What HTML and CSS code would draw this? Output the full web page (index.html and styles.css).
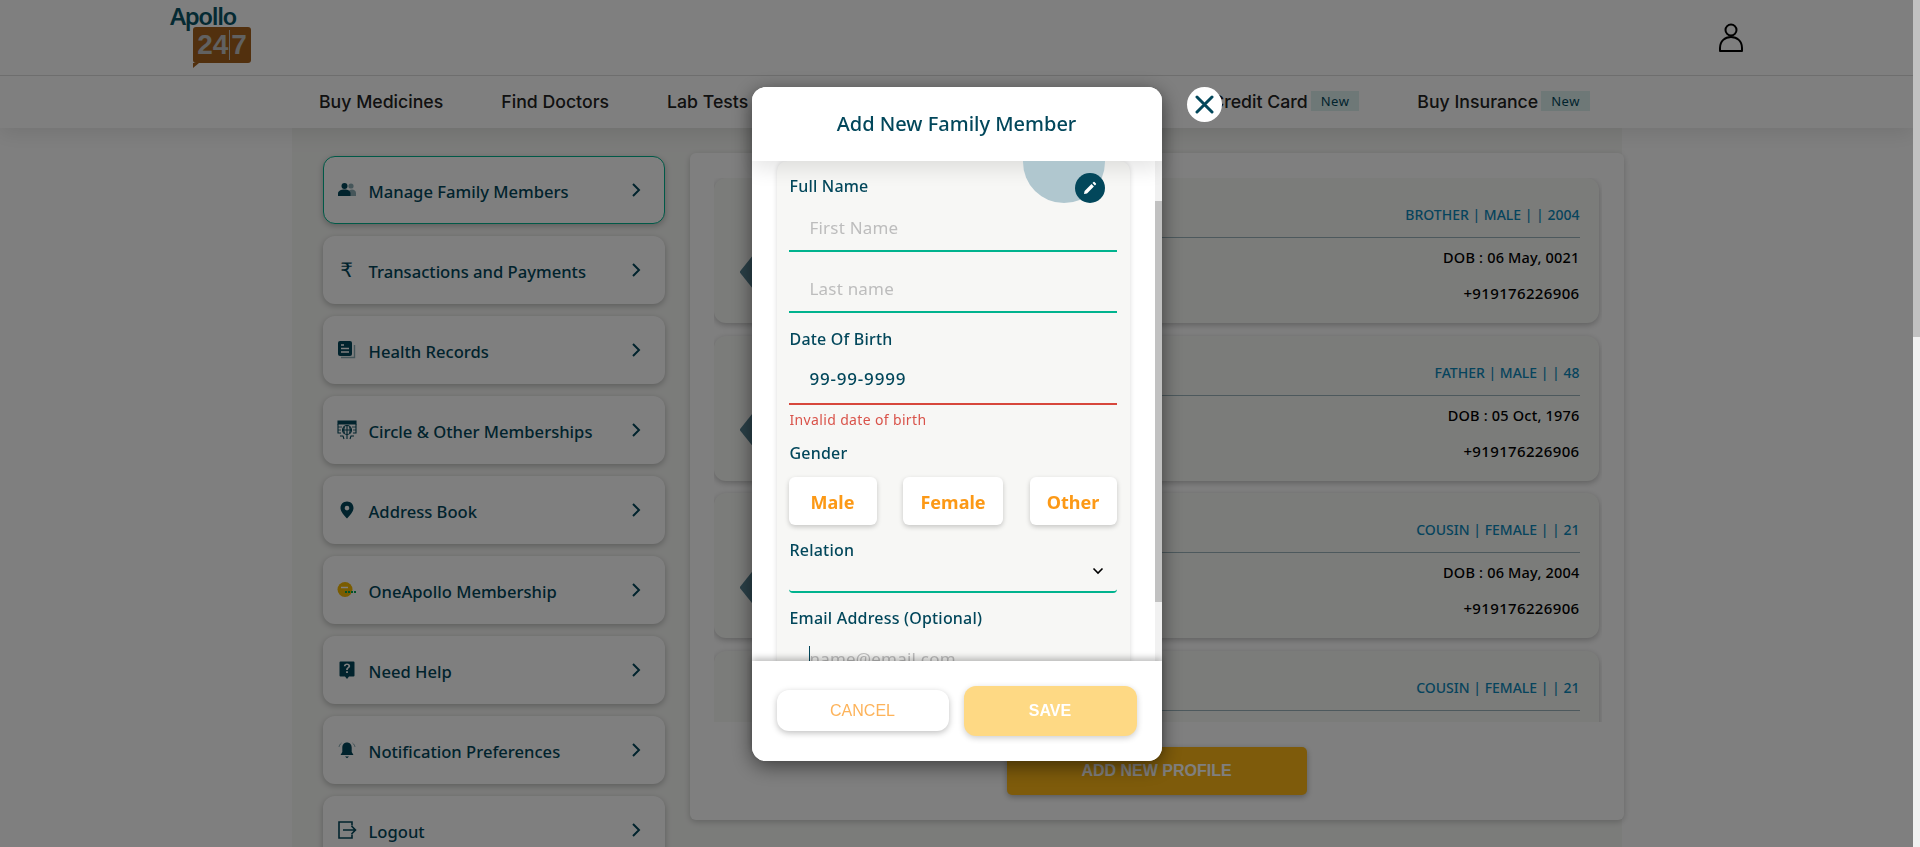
FILE: index.html
```html
<!DOCTYPE html>
<html>
	<head>
		<meta charset="utf-8">
		<title>Manage Family Members</title>
		<link rel="stylesheet" href="styles.css">
	</head>
	<body>
		<div class="page">
			<div class="head">
				<div class="top-bar">
					<div class="logo">
						<div class="logo-name">Apollo</div>
						<div class="logo-box"><span>24</span><i></i><span>7</span></div>
					</div>
					<svg class="user-icon" width="26" height="30" viewBox="0 0 26 30" fill="none" stroke="#000" stroke-width="2">
						<circle cx="13" cy="7" r="5.5"/>
						<path d="M2 28v-3c0-7 5-11 11-11s11 4 11 11v3z" stroke-linejoin="round"/>
					</svg>
				</div>
				<div class="nav">
					<a>Buy Medicines</a>
					<a>Find Doctors</a>
					<a>Lab Tests</a>
					<a>Circle Membership</a>
					<a>Health Records</a>
					<a>Credit Card<span class="tag">New</span></a>
					<a>Buy Insurance<span class="tag">New</span></a>
				</div>
			</div>

			<div class="content">
				<ul class="side">
					<li class="active">
						<svg class="ico" width="20" height="20" viewBox="0 0 20 20" fill="#02475b"><circle cx="14" cy="6" r="2.6" opacity=".45"/><path d="M12 16h7v-3c0-2-2-3.500-4-3.500-1 0-2 .3-3 1z" opacity=".45"/><circle cx="7.500" cy="6" r="3"/><path d="M1 16v-2.500c0-2.500 3-4 6.500-4s6 1.500 6 4V16z"/></svg>
						<span>Manage Family Members</span>
						<svg class="arrow" width="10" height="16" viewBox="0 0 10 16"><path d="M2 2l6 6-6 6" fill="none" stroke="#02475b" stroke-width="2"/></svg>
					</li>
					<li>
						<b class="ico rupee">₹</b>
						<span>Transactions and Payments</span>
						<svg class="arrow" width="10" height="16" viewBox="0 0 10 16"><path d="M2 2l6 6-6 6" fill="none" stroke="#02475b" stroke-width="2"/></svg>
					</li>
					<li>
						<svg class="ico" width="20" height="20" viewBox="0 0 20 20"><path d="M4 17.500h13.500V5" fill="none" stroke="#02475b" stroke-width="1.400" opacity=".45"/><rect x="1" y="1" width="14" height="15" rx="2" fill="#02475b"/><path d="M4 5h3M4 8.500h8M4 12h8" stroke="#fff" stroke-width="1.500"/></svg>
						<span>Health Records</span>
						<svg class="arrow" width="10" height="16" viewBox="0 0 10 16"><path d="M2 2l6 6-6 6" fill="none" stroke="#02475b" stroke-width="2"/></svg>
					</li>
					<li>
						<svg class="ico" width="20" height="20" viewBox="0 0 20 20" fill="none" stroke="#02475b" stroke-width="1.100"><path d="M1 1h18v3H1z" fill="#02475b"/><path d="M1 4v9h3M19 4v9h-3"/><path d="M1 7h4M15 7h4M1 10h3M16 10h3" stroke-width=".8"/><circle cx="10" cy="10" r="4.500"/><path d="M5.500 10h9M10 5.500v9M7.500 6.500c-1 2-1 5 0 7M12.500 6.500c1 2 1 5 0 7"/><path d="M3 16h3l1 3M17 16h-3l-1 3M10 15v4"/></svg>
						<span>Circle &amp; Other Memberships</span>
						<svg class="arrow" width="10" height="16" viewBox="0 0 10 16"><path d="M2 2l6 6-6 6" fill="none" stroke="#02475b" stroke-width="2"/></svg>
					</li>
					<li>
						<svg class="ico" width="20" height="20" viewBox="0 0 20 20"><path fill-rule="evenodd" d="M10 1.500c-3.800 0-6.500 2.800-6.500 6.400 0 4 4 7.700 6.500 10.600 2.500-2.900 6.500-6.600 6.500-10.600 0-3.600-2.700-6.400-6.500-6.400zm0 4.300a2.300 2.300 0 110 4.600 2.300 2.300 0 010-4.600z" fill="#02475b"/></svg>
						<span>Address Book</span>
						<svg class="arrow" width="10" height="16" viewBox="0 0 10 16"><path d="M2 2l6 6-6 6" fill="none" stroke="#02475b" stroke-width="2"/></svg>
					</li>
					<li>
						<svg class="ico" width="20" height="20" viewBox="0 0 20 20"><circle cx="8" cy="9.500" r="7.500" fill="#f5b800"/><path d="M4 7.500h7" stroke="#fff" stroke-width="1.500"/><path d="M8 12h12" stroke="#00a651" stroke-width="2" stroke-dasharray="2 1"/></svg>
						<span>OneApollo Membership</span>
						<svg class="arrow" width="10" height="16" viewBox="0 0 10 16"><path d="M2 2l6 6-6 6" fill="none" stroke="#02475b" stroke-width="2"/></svg>
					</li>
					<li>
						<svg class="ico" width="20" height="20" viewBox="0 0 20 20"><path fill-rule="evenodd" d="M3.500 1.500h13a1 1 0 011 1v13a1 1 0 01-1 1H12l-2 2.500-2-2.500H3.500a1 1 0 01-1-1v-13a1 1 0 011-1zM10 3.500c-1.800 0-3 1-3.200 2.700h1.700c.1-.7.600-1.200 1.500-1.200s1.400.5 1.400 1.100c0 1.400-2.300 1.400-2.300 3.900h1.700c0-1.900 2.400-2 2.400-4 0-1.500-1.300-2.500-3.200-2.500zM9.100 11.200v1.800h1.800v-1.800z" fill="#02475b"/></svg>
						<span>Need Help</span>
						<svg class="arrow" width="10" height="16" viewBox="0 0 10 16"><path d="M2 2l6 6-6 6" fill="none" stroke="#02475b" stroke-width="2"/></svg>
					</li>
					<li>
						<svg class="ico" width="20" height="20" viewBox="0 0 20 20"><path d="M10 2.500c-3 0-4.700 2.300-4.700 5v4.500L3.500 15h13l-1.800-3V7.500c0-2.700-1.700-5-4.700-5z" fill="#02475b"/><path d="M8 16.500h4l-2 1.800z" fill="#02475b"/><path d="M4.500 3C3 4.200 2.200 5.500 2 7M15.500 3c1.500 1.200 2.300 2.500 2.500 4" fill="none" stroke="#02475b" stroke-width="1" opacity=".45"/></svg>
						<span>Notification Preferences</span>
						<svg class="arrow" width="10" height="16" viewBox="0 0 10 16"><path d="M2 2l6 6-6 6" fill="none" stroke="#02475b" stroke-width="2"/></svg>
					</li>
					<li>
						<svg class="ico" width="20" height="20" viewBox="0 0 20 20" fill="none" stroke="#02475b" stroke-width="1.600"><path d="M15 5.500V2H2v16h13v-3.500"/><path d="M6 10h12M14.500 6l4 4-4 4"/></svg>
						<span>Logout</span>
						<svg class="arrow" width="10" height="16" viewBox="0 0 10 16"><path d="M2 2l6 6-6 6" fill="none" stroke="#02475b" stroke-width="2"/></svg>
					</li>
				</ul>

				<div class="main">
					<div class="members">
						<div class="member">
							<div class="hex"></div>
							<div class="info">
								<div class="rel">BROTHER | MALE | | 2004</div>
								<div class="dob">DOB : 06 May, 0021</div>
								<div class="phone">+919176226906</div>
							</div>
						</div>
						<div class="member">
							<div class="hex"></div>
							<div class="info">
								<div class="rel">FATHER | MALE | | 48</div>
								<div class="dob">DOB : 05 Oct, 1976</div>
								<div class="phone">+919176226906</div>
							</div>
						</div>
						<div class="member">
							<div class="hex"></div>
							<div class="info">
								<div class="rel">COUSIN | FEMALE | | 21</div>
								<div class="dob">DOB : 06 May, 2004</div>
								<div class="phone">+919176226906</div>
							</div>
						</div>
						<div class="member">
							<div class="hex"></div>
							<div class="info">
								<div class="rel">COUSIN | FEMALE | | 21</div>
							</div>
						</div>
					</div>
					<div class="add-btn">ADD NEW PROFILE</div>
				</div>
			</div>
		</div>

		<div class="overlay">
			<div class="modal">
				<div class="close">
					<svg width="19" height="19" viewBox="0 0 19 19"><path d="M2 2l15 15M17 2L2 17" stroke="#02475b" stroke-width="3" stroke-linecap="round"/></svg>
				</div>
				<div class="modal-head">Add New Family Member</div>
				<div class="modal-body">
					<div class="form">
						<div class="photo">
							<div class="edit">
								<svg width="14" height="14" viewBox="0 0 14 14"><path d="M1 13l.6-3L8.500 3.100l2.400 2.400L4 12.400zM9.500 2.100l1-1a.7.7 0 011 0l1.400 1.400a.7.7 0 010 1l-1 1z" fill="#fff"/></svg>
							</div>
						</div>
						<div class="label first">Full Name</div>
						<div class="field ph f1">First Name</div>
						<div class="field ph f2">Last name</div>
						<div class="label dob-label">Date Of Birth</div>
						<div class="field bad">99-99-9999</div>
						<div class="err">Invalid date of birth</div>
						<div class="label gender-label">Gender</div>
						<div class="genders">
							<div class="male">Male</div>
							<div class="female">Female</div>
							<div class="other">Other</div>
						</div>
						<div class="label rel-label">Relation</div>
						<div class="select">
							<svg width="12" height="8" viewBox="0 0 12 8"><path d="M1.500 1.500L6 6l4.500-4.500" fill="none" stroke="#000" stroke-width="1.600"/></svg>
						</div>
						<div class="label mail-label">Email Address (Optional)</div>
						<div class="field ph mail"><i class="caret"></i>name@email.com</div>
					</div>
					<div class="bar"><div class="bar-thumb"></div></div>
				</div>
				<div class="modal-foot">
					<div class="cancel">CANCEL</div>
					<div class="save">SAVE</div>
				</div>
			</div>
		</div>

		<div class="bar page-bar"><div class="bar-thumb"></div></div>
	</body>
</html>
```

FILE: styles.css
```css
*{
	margin: 0;
	padding: 0;
	box-sizing: border-box;
}
html,body{
	height: 100%;
	overflow: hidden;
}
body{
	font-family: "Noto Sans", sans-serif;
	background: #fff;
}
li{
	list-style: none;
}
.page{
	width: 1913px;
	height: 847px;
	overflow: hidden;
}

/* header */
.head{
	position: relative;
	z-index: 1;
	background: #fff;
	box-shadow: 0 5px 20px rgba(0,0,0,0.1);
}
.top-bar{
	height: 76px;
	padding-left: 170px;
	padding-right: 169px;
	border-bottom: 1px solid #ddd;
	display: flex;
	justify-content: space-between;
	align-items: flex-start;
}
.logo{
	position: relative;
	z-index: 20;
	width: 82px;
	padding-top: 3px;
}
.logo-name{
	font-size: 24px;
	font-weight: 600;
	line-height: 26px;
	letter-spacing: -1.4px;
	color: #0b5566;
}
.logo-box{
	position: relative;
	margin: -2px 0 0 23px;
	width: 58px;
	height: 36px;
	background: #a5611c;
	border-radius: 3px;
	display: flex;
	align-items: center;
	justify-content: center;
	gap: 1px;
	font-family: "Liberation Sans", sans-serif;
	font-weight: 700;
	font-size: 28px;
	line-height: 30px;
	color: #c2c2c2;
}
.logo-box i{
	width: 1px;
	height: 30px;
	background: #c2c2c2;
}
.logo-box::after{
	content: "";
	position: absolute;
	left: 0;
	top: 100%;
	border-top: 5px solid #a5611c;
	border-right: 6px solid transparent;
}
.user-icon{
	margin-top: 23px;
}
.nav{
	height: 52px;
	padding-left: 319px;
	padding-bottom: 2px;
	display: flex;
	align-items: center;
	gap: 58px;
	font-family: Inter, sans-serif;
	font-size: 17.700px;
	font-weight: 500;
	color: #222;
}
.nav a{
	display: flex;
	align-items: center;
	white-space: nowrap;
}
.tag{
	margin-left: 3px;
	height: 20px;
	padding: 0 10px;
	background: #dcf0ef;
	color: #02475b;
	font-family: "Noto Sans", sans-serif;
	font-size: 13px;
	font-weight: 400;
	letter-spacing: 0.5px;
	line-height: 20px;
}

/* page body */
.content{
	width: 1330px;
	height: 719px;
	margin: 0 auto;
	padding: 25px 0 0 31px;
	background: #f7f8f5;
	display: grid;
	grid-template-columns: 342px 934px;
	column-gap: 25px;
	align-items: start;
}
.side{
	margin-top: 3px;
}
.side li{
	height: 68px;
	margin-bottom: 12px;
	padding: 0 24px 0 14px;
	background: #fff;
	border-radius: 12px;
	box-shadow: 0 2px 6px rgba(0,0,0,0.25);
	display: flex;
	align-items: center;
	font-size: 16.600px;
	font-weight: 500;
	color: #02475b;
}
.side li.active{
	border: 1px solid #00b38e;
	padding: 0 23px 0 13px;
}
.side li span{
	flex: 1;
	margin-top: 3px;
	white-space: nowrap;
}
.ico{
	width: 20px;
	height: 20px;
	margin-right: 12px;
	flex-shrink: 0;
}
.rupee{
	font-family: "DejaVu Sans", sans-serif;
	font-size: 20px;
	font-weight: 400;
	line-height: 20px;
	text-align: center;
}
.main{
	height: 667px;
	padding: 25px 24px;
	background: #fff;
	border-radius: 6px;
	box-shadow: 0 2px 6px rgba(0,0,0,0.2);
}
.members{
	height: 544px;
	overflow: hidden;
	margin-right: -2px;
	padding-right: 3px;
}
.member{
	height: 145px;
	margin-bottom: 12.700px;
	background: #f7f8f5;
	border-radius: 12px;
	box-shadow: 0 2px 6px rgba(0,0,0,0.25);
	display: flex;
	align-items: flex-start;
}
.hex{
	width: 100px;
	height: 100px;
	margin: 44px 0 0 26px;
	background: #568090;
	clip-path: polygon(0 50%, 40% 0, 60% 0, 100% 50%, 60% 100%, 40% 100%);
}
.info{
	flex: 1;
	padding: 27px 19px 0 30px;
	text-align: right;
	font-size: 14px;
	font-weight: 500;
	line-height: 20px;
	color: #000;
}
.rel{
	padding-bottom: 12px;
	border-bottom: 1px solid #9ab3bb;
	color: #0d88ba;
}
.dob{
	margin-top: 9px;
	font-size: 14.500px;
	letter-spacing: 0.2px;
}
.phone{
	margin-top: 16px;
	font-size: 15px;
	letter-spacing: 0.35px;
}
.add-btn{
	width: 300px;
	height: 48px;
	margin: 25px auto 0;
	background: #fcb716;
	border-radius: 5px;
	box-shadow: 0 2px 6px rgba(0,0,0,0.3);
	font-family: "Liberation Sans", sans-serif;
	font-weight: 700;
	font-size: 16px;
	line-height: 48px;
	text-align: center;
	color: #fff;
}

/* fake scrollbars */
.bar{
	width: 7px;
	background: #f1f1f1;
	flex-shrink: 0;
}
.bar-thumb{
	background: #c1c1c1;
}
.page-bar{
	position: fixed;
	top: 0;
	right: 0;
	bottom: 0;
	z-index: 30;
}
.page-bar .bar-thumb{
	height: 337px;
}

/* modal */
.overlay{
	position: fixed;
	top: 0;
	left: 0;
	right: 0;
	bottom: 0;
	z-index: 10;
	padding-right: 7px;
	background: rgba(0,0,0,0.5);
	display: flex;
	align-items: center;
	justify-content: center;
}
.modal{
	position: relative;
	width: 410px;
	height: 674px;
	background: #fff;
	border-radius: 14px;
	box-shadow: 0 5px 20px rgba(0,0,0,0.5);
	display: flex;
	flex-direction: column;
}
.close{
	position: absolute;
	top: 0;
	right: -60px;
	width: 35px;
	height: 35px;
	border-radius: 50%;
	background: #fff;
	display: flex;
	align-items: center;
	justify-content: center;
}
.modal-head{
	position: relative;
	z-index: 2;
	height: 74px;
	padding-top: 23px;
	background: #fff;
	border-radius: 14px 14px 0 0;
	box-shadow: 0 8px 20px rgba(0,0,0,0.1);
	font-size: 20px;
	font-weight: 500;
	line-height: 27px;
	text-align: center;
	color: #02475b;
}
.modal-body{
	flex: 1;
	min-height: 0;
	overflow: hidden;
	padding-left: 25px;
	display: flex;
	justify-content: space-between;
}
.modal-body .bar-thumb{
	height: 401px;
	margin-top: 40px;
}
.form{
	position: relative;
	width: 353px;
	height: 640px;
	padding: 15px 13px 0 12px;
	background: #f7f7f5;
	border-radius: 10px;
	box-shadow: 0 0 5px rgba(0,0,0,0.15);
	font-size: 16px;
	letter-spacing: 0.2px;
	color: #02475b;
}
.photo{
	position: absolute;
	z-index: 3;
	top: -40px;
	right: 25px;
	width: 82px;
	height: 82px;
	border-radius: 50%;
	background: #b0c7cf;
}
.edit{
	position: absolute;
	right: 0;
	bottom: 0;
	width: 30px;
	height: 30px;
	border-radius: 50%;
	background: #02475b;
	display: flex;
	align-items: center;
	justify-content: center;
}
.label{
	padding-left: 1px;
	font-weight: 500;
	line-height: 20px;
}
.field{
	position: relative;
	padding: 0 0 12px 21px;
	border-bottom: 2px solid #00b38e;
	font-size: 17px;
	line-height: 20px;
}
.ph{
	color: #bdbdbd;
}
.f1{
	margin-top: 22px;
}
.f2{
	margin-top: 27px;
}
.dob-label{
	margin-top: 16px;
}
.bad{
	margin-top: 20px;
	padding-bottom: 14px;
	border-bottom-color: #d7473c;
	font-weight: 500;
	letter-spacing: 0.8px;
}
.err{
	margin-top: 6px;
	padding-left: 1px;
	font-size: 14px;
	letter-spacing: 0.35px;
	line-height: 18px;
	color: #d9534a;
}
.gender-label{
	margin-top: 14px;
}
.genders{
	margin-top: 14px;
	display: flex;
	justify-content: space-between;
}
.genders div{
	height: 48px;
	background: #fff;
	border-radius: 6px;
	box-shadow: 0 2px 5px rgba(0,0,0,0.2);
	font-size: 18px;
	font-weight: 700;
	letter-spacing: 0;
	line-height: 50px;
	text-align: center;
	color: #fc9916;
}
.male{
	width: 88px;
}
.female{
	width: 100px;
}
.other{
	width: 87px;
}
.rel-label{
	margin-top: 15px;
}
.select{
	height: 33px;
	padding: 7px 13px 0 0;
	border-bottom: 2px solid #00b38e;
	border-radius: 0 0 4px 4px;
	display: flex;
	align-items: flex-start;
	justify-content: flex-end;
}
.mail-label{
	margin-top: 15px;
}
.mail{
	margin-top: 21px;
}
.caret{
	position: absolute;
	left: 20px;
	top: -3px;
	width: 1px;
	height: 20px;
	background: #02475b;
}
.modal-foot{
	position: relative;
	z-index: 2;
	height: 100px;
	padding: 0 25px;
	background: #fff;
	border-radius: 0 0 14px 14px;
	box-shadow: 0 -3px 6px rgba(0,0,0,0.25);
	display: flex;
	align-items: center;
	gap: 15px;
	font-family: "Liberation Sans", sans-serif;
	font-size: 16px;
	text-align: center;
}
.cancel{
	width: 172px;
	height: 41px;
	background: #fff;
	border-radius: 12px;
	box-shadow: 0 2px 6px rgba(0,0,0,0.25);
	line-height: 41px;
	color: #fdb35a;
}
.save{
	width: 173px;
	height: 50px;
	background: #fed984;
	border-radius: 12px;
	box-shadow: 0 2px 6px rgba(0,0,0,0.2);
	line-height: 50px;
	font-weight: 700;
	color: #fff;
}
```
